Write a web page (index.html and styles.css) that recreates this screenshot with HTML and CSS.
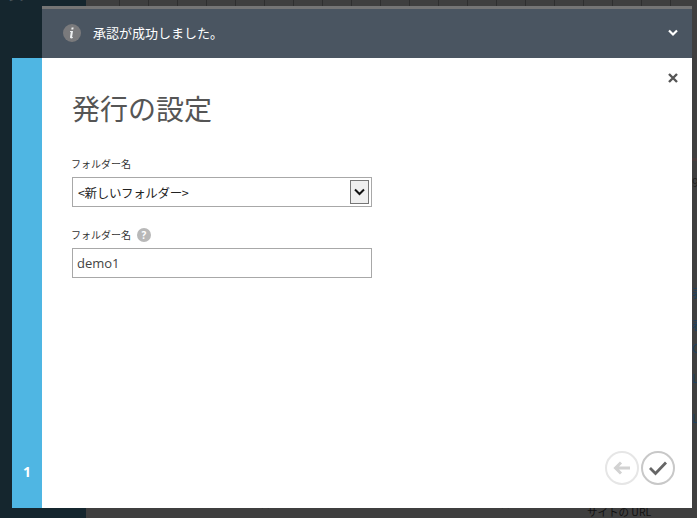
FILE: index.html
```html
<!DOCTYPE html>
<html lang="ja">
<head>
<meta charset="utf-8">
<title>発行の設定</title>
<link rel="stylesheet" href="styles.css">
</head>
<body>
<div class="backdrop">
  <aside class="side"><span class="side-text">ジノ</span></aside>
  <main class="main">
    <div class="ticks">
      <i></i><i></i><i></i><i></i><i></i><i></i><i></i><i></i><i></i><i></i><i></i><i></i><i></i><i></i><i></i><i></i><i></i><i></i><i></i><i></i>
    </div>
    <div class="edge">
      <span class="edge-bar"></span>
      <span class="edge-dark">9:</span>
      <span>表</span>
      <span>春</span>
      <span>C</span>
      <span>L</span>
      <span>L</span>
    </div>
    <div class="under">
      <span class="under-a">発行プロファイルの名前です</span>
      <span class="under-b">名前</span>
      <span class="under-c">サイトの URL</span>
    </div>
  </main>
</div>

<section class="dialog">
  <header class="banner">
    <svg class="info" width="18" height="18" viewBox="0 0 18 18">
      <circle cx="9" cy="9" r="9" fill="#7a7a7c"/>
      <path d="M10.6 3.6l-.3 2h-2l.3-2zM10 7l-.9 5.900c0 .4.3.4.9.2l-.2 1c-1.500.6-3 .4-2.800-1l.8-5.100h-.8l.1-1z" fill="#eef0f1"/>
    </svg>
    <span class="banner-text">承認が成功しました。</span>
    <svg class="chev" width="10" height="8" viewBox="0 0 10 8">
      <path d="M1 1.500l4 4 4-4" fill="none" stroke="#fff" stroke-width="2.200"/>
    </svg>
  </header>
  <div class="panel">
    <div class="rail"><span class="step">1</span></div>
    <div class="content">
      <svg class="close" width="10" height="10" viewBox="0 0 10 10">
        <path d="M1 1l8 8M9 1l-8 8" stroke="#555" stroke-width="2.400" fill="none"/>
      </svg>
      <h1 class="title">発行の設定</h1>
      <form class="form">
        <div class="field">
          <label class="label">フォルダー名</label>
          <div class="select">
            <span class="select-text">&lt;新しいフォルダー&gt;</span>
            <span class="select-btn">
              <svg width="11" height="8" viewBox="0 0 11 8"><path d="M1 1.500l4.500 4.500 4.500-4.500" fill="none" stroke="#111" stroke-width="2"/></svg>
            </span>
          </div>
        </div>
        <div class="field">
          <label class="label">フォルダー名
            <span class="help">?</span>
          </label>
          <div class="input">demo1</div>
        </div>
      </form>
      <div class="actions">
        <span class="round round-off">
          <svg width="18" height="14" viewBox="0 0 18 14"><path d="M8 1.500L2.500 7 8 12.500M2.500 7H17" fill="none" stroke="#d2d2d2" stroke-width="3"/></svg>
        </span>
        <span class="round">
          <svg width="20" height="16" viewBox="0 0 20 16"><path d="M2 8l5.500 5.500L18 2.500" fill="none" stroke="#666" stroke-width="2.800"/></svg>
        </span>
      </div>
    </div>
  </div>
</section>
</body>
</html>
```

FILE: styles.css
```css
* { box-sizing: border-box; }
html, body { margin: 0; height: 100%; }
body {
  width: 697px;
  height: 518px;
  overflow: hidden;
  position: relative;
  font-family: "Noto Sans CJK JP", "Open Sans", sans-serif;
  background: #3f3f3f;
}
.backdrop { display: flex; height: 518px; }
.side { width: 86px; background: #15262e; flex: none; position: relative; overflow: hidden; }
.side-text { position: absolute; left: 8px; top: -10px; font-size: 11px; line-height: 12px; color: #4a555c; }
.main { flex: 1; display: flex; flex-direction: column; justify-content: space-between; overflow: hidden; position: relative; }
.ticks { display: flex; height: 6px; padding-left: 5px; }
.ticks i { width: 29px; flex: none; border-right: 1px solid #2f2f2f; }
.edge span {
  position: absolute;
  left: 606px;
  font-size: 12px;
  line-height: 14px;
  color: #1d3f5c;
  white-space: nowrap;
}
.edge span:nth-child(3) { top: 286px; }
.edge span:nth-child(4) { top: 318px; }
.edge span:nth-child(5) { top: 341px; }
.edge span:nth-child(6) { top: 371px; }
.edge span:nth-child(7) { top: 411px; }
.edge .edge-dark { top: 175px; color: #222; }
.edge .edge-bar { top: 158px; width: 5px; height: 3px; background: #4a3d3d; }
.under { position: relative; height: 18px; color: #141414; font-size: 12px; line-height: 18px; }
.under span { position: absolute; white-space: nowrap; }
.under-a { left: 64px; top: -7px; }
.under-b { left: 412px; top: -7px; }
.under-c { left: 501px; top: 3px; color: #111; font-size: 10.500px; }

.dialog {
  position: absolute;
  left: 12px;
  top: 6px;
  width: 680px;
  height: 502px;
  display: flex;
  flex-direction: column;
}
.banner {
  margin-left: 30px;
  height: 52px;
  flex: none;
  background: #4a5561;
  border-top: 3px solid #757575;
  display: flex;
  align-items: center;
  padding: 0 14px 0 21px;
  color: #fff;
  font-size: 13px;
}
.info { flex: none; margin-right: 12px; margin-top: -2px; }
.banner-text { flex: 1; line-height: 18px; margin-top: -2px; }
.chev { flex: none; margin-top: -2px; }
.panel { flex: 1; display: flex; min-height: 0; }
.rail {
  width: 30px;
  flex: none;
  background: #4fb6e3;
  display: flex;
  align-items: flex-end;
  justify-content: center;
  padding-bottom: 28px;
}
.step { color: #fff; font: bold 14px/16px "Open Sans", sans-serif; }
.content {
  flex: 1;
  background: #fff;
  position: relative;
  padding: 34px 30px 0;
}
.close { position: absolute; right: 14px; top: 15px; }
.title {
  margin: 0;
  font-size: 28px;
  line-height: 32px;
  font-weight: 400;
  color: #555;
}
.form { margin-top: 33px; width: 300px; display: flex; flex-direction: column; gap: 21px; }
.field { display: flex; flex-direction: column; }
.label {
  font-size: 10px;
  line-height: 14px;
  color: #333;
  margin: 0 0 6px -1px;
  display: flex;
  align-items: center;
  gap: 6px;
}
.help {
  width: 14px;
  height: 14px;
  border-radius: 50%;
  background: #b8b8b8;
  color: #fff;
  font: bold 10px/14px "Open Sans", sans-serif;
  text-align: center;
}
.select, .input {
  height: 30px;
  border: 1px solid #a8a8a8;
  background: #fff;
  display: flex;
  align-items: center;
  font-size: 13px;
  color: #222;
}
.select { justify-content: space-between; padding: 0 2px 0 5px; }
.select-text { font-size: 12.500px; letter-spacing: -0.35px; }
.select-btn {
  width: 19px;
  height: 24px;
  background: #efefef;
  border: 1px solid #767676;
  display: flex;
  align-items: center;
  justify-content: center;
}
.input { padding-left: 4px; color: #444; font-family: "Open Sans", sans-serif; }
.actions {
  position: absolute;
  right: 17px;
  bottom: 23px;
  display: flex;
  gap: 2px;
}
.round {
  width: 34px;
  height: 34px;
  border: 2px solid #c8c8c8;
  border-radius: 50%;
  display: flex;
  align-items: center;
  justify-content: center;
}
.round-off { border-color: #e6e6e6; }
```
